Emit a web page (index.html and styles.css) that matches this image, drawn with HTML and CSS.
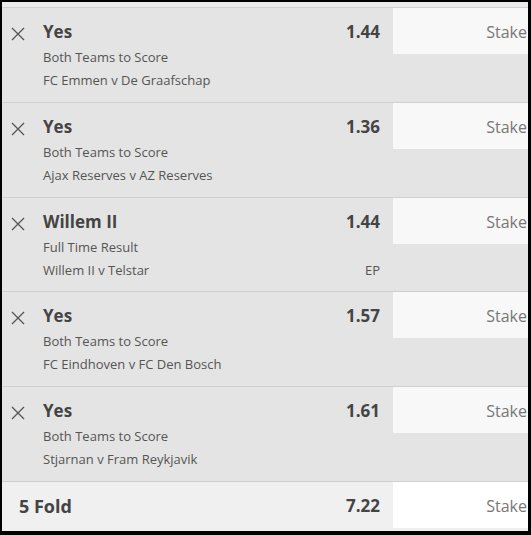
FILE: index.html
```html
<html lang="en">
<head>
    <meta charset="UTF-8">
    <title>Bet Slip</title>
    <link rel="stylesheet" href="styles.css">
</head>
<body>
    <div class="slip">
        <div class="slip-top"></div>

        <div class="bet">
            <button class="remove" title="Remove">
                <svg width="14" height="14" viewBox="0 0 14 14"><path d="M1 1L13 13M13 1L1 13"/></svg>
            </button>
            <div class="info">
                <div class="selection">Yes</div>
                <div class="market">Both Teams to Score</div>
                <div class="event">FC Emmen v De Graafschap</div>
            </div>
            <div class="price">
                <div class="odds">1.44</div>
            </div>
            <input class="stake" type="text" placeholder="Stake">
        </div>

        <div class="bet">
            <button class="remove" title="Remove">
                <svg width="14" height="14" viewBox="0 0 14 14"><path d="M1 1L13 13M13 1L1 13"/></svg>
            </button>
            <div class="info">
                <div class="selection">Yes</div>
                <div class="market">Both Teams to Score</div>
                <div class="event">Ajax Reserves v AZ Reserves</div>
            </div>
            <div class="price">
                <div class="odds">1.36</div>
            </div>
            <input class="stake" type="text" placeholder="Stake">
        </div>

        <div class="bet">
            <button class="remove" title="Remove">
                <svg width="14" height="14" viewBox="0 0 14 14"><path d="M1 1L13 13M13 1L1 13"/></svg>
            </button>
            <div class="info">
                <div class="selection">Willem II</div>
                <div class="market">Full Time Result</div>
                <div class="event">Willem II v Telstar</div>
            </div>
            <div class="price">
                <div class="odds">1.44</div>
                <div class="ep">EP</div>
            </div>
            <input class="stake" type="text" placeholder="Stake">
        </div>

        <div class="bet">
            <button class="remove" title="Remove">
                <svg width="14" height="14" viewBox="0 0 14 14"><path d="M1 1L13 13M13 1L1 13"/></svg>
            </button>
            <div class="info">
                <div class="selection">Yes</div>
                <div class="market">Both Teams to Score</div>
                <div class="event">FC Eindhoven v FC Den Bosch</div>
            </div>
            <div class="price">
                <div class="odds">1.57</div>
            </div>
            <input class="stake" type="text" placeholder="Stake">
        </div>

        <div class="bet">
            <button class="remove" title="Remove">
                <svg width="14" height="14" viewBox="0 0 14 14"><path d="M1 1L13 13M13 1L1 13"/></svg>
            </button>
            <div class="info">
                <div class="selection">Yes</div>
                <div class="market">Both Teams to Score</div>
                <div class="event">Stjarnan v Fram Reykjavik</div>
            </div>
            <div class="price">
                <div class="odds">1.61</div>
            </div>
            <input class="stake" type="text" placeholder="Stake">
        </div>

        <div class="multiple">
            <div class="fold-name">5 Fold</div>
            <div class="odds">7.22</div>
            <input class="stake stake-white" type="text" placeholder="Stake">
        </div>
    </div>
</body>
</html>
```

FILE: styles.css
```css
html {
    background: #000;
}

body {
    margin: 2px 3px 0 2px;
    font-family: "Open Sans", "Liberation Sans", sans-serif;
    color: #444;
}

.slip {
    height: 529px;
    overflow: hidden;
    background: #e4e4e4;
}

.slip-top {
    height: 5px;
    background: #ebebeb;
}

.bet {
    display: flex;
    height: 93.8px;
    border-top: 1px solid #d0d0d0;
}

.remove {
    width: 41px;
    height: 46px;
    padding: 0 0 0 9px;
    margin: 0;
    border: none;
    background: none;
    display: flex;
    align-items: center;
    cursor: pointer;
}
.remove svg {
    margin-top: 6px;
}
.remove path {
    stroke: #555;
    stroke-width: 1.3;
    fill: none;
}

.info {
    flex: 1;
    padding-top: 10px;
}

.selection {
    font-size: 17px;
    font-weight: bold;
    line-height: 28px;
}

.market,
.event {
    font-size: 13px;
    line-height: 23px;
    color: #555;
}

.price {
    padding-top: 10px;
    padding-right: 13px;
    text-align: right;
}

.odds {
    font-size: 17px;
    font-weight: bold;
    line-height: 28px;
}

.ep {
    margin-top: 23px;
    font-size: 13px;
    line-height: 23px;
    color: #555;
}

.stake {
    width: 135px;
    height: 46px;
    box-sizing: border-box;
    margin: 0;
    padding: 2px 1px 0 0;
    border: none;
    outline: none;
    background: #f8f8f8;
    font-family: "Open Sans", "Liberation Sans", sans-serif;
    font-size: 16px;
    text-align: right;
    color: #444;
}
.stake::placeholder {
    color: #777;
}
.stake-white {
    background: #fff;
}

.multiple {
    display: flex;
    align-items: center;
    height: 49px;
    border-top: 1px solid #d0d0d0;
    background: #f0f0f0;
}
.multiple .stake {
    align-self: flex-start;
}

.fold-name {
    flex: 1;
    padding-left: 17px;
    font-size: 18px;
    font-weight: bold;
}
.multiple .odds {
    padding-right: 13px;
}
```
